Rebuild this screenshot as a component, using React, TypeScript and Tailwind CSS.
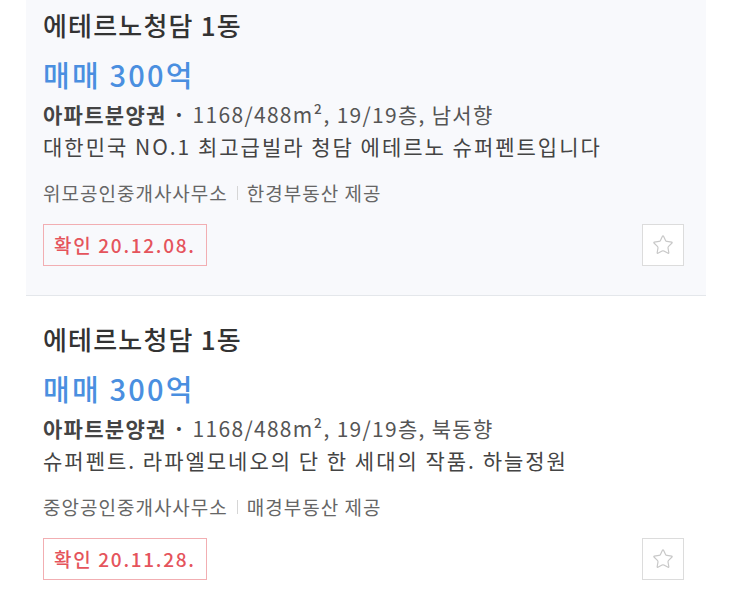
import { Star } from 'lucide-react';

type Listing = {
  name: string;
  price: string;
  spec: string;
  desc: string;
  agency: string;
  source: string;
  checked: string;
  highlight?: boolean;
};

const listings: Listing[] = [
  {
    name: '에테르노청담 1동',
    price: '매매 300억',
    spec: '1168/488m², 19/19층, 남서향',
    desc: '대한민국 NO.1 최고급빌라 청담 에테르노 슈퍼펜트입니다',
    agency: '위모공인중개사사무소',
    source: '한경부동산 제공',
    checked: '확인 20.12.08.',
    highlight: true,
  },
  {
    name: '에테르노청담 1동',
    price: '매매 300억',
    spec: '1168/488m², 19/19층, 북동향',
    desc: '슈퍼펜트. 라파엘모네오의 단 한 세대의 작품. 하늘정원',
    agency: '중앙공인중개사사무소',
    source: '매경부동산 제공',
    checked: '확인 20.11.28.',
  },
];

function ListingCard({ item }: { item: Listing }) {
  return (
    <div
      className={`border-b border-[#e4e7eb] pt-[27px] pb-[29px] pl-[17px] pr-[22px] ${
        item.highlight ? 'bg-[#f8f9fc]' : 'bg-white'
      }`}
    >
      <h2 className="text-[26px] leading-[32px] font-medium text-[#333] tracking-[1.2px]">{item.name}</h2>
      <p className="mt-[15px] text-[29px] leading-[36px] font-medium text-[#4a8fe0] tracking-[2.2px]">
        {item.price}
      </p>
      <p className="mt-[8px] text-[21px] leading-[28px] text-[#555] tracking-[1.3px]">
        <span className="font-bold text-[#444]">아파트분양권 · </span>
        {item.spec}
      </p>
      <p className="mt-[4px] text-[21px] leading-[28px] text-[#444] tracking-[2px]">{item.desc}</p>
      <p className="mt-[20px] flex items-center text-[19px] leading-[26px] text-[#666] tracking-[1px]">
        <span>{item.agency}</span>
        <span className="mx-[9px] h-[14px] w-px bg-[#d6d6d6]" />
        <span>{item.source}</span>
      </p>
      <div className="mt-[18px] flex items-center justify-between">
        <span className="flex h-[42px] items-center border border-[#f2aeb2] px-[10px] text-[19px] font-medium text-[#e5545c] tracking-[1.7px]">
          {item.checked}
        </span>
        <button className="flex h-[42px] w-[42px] items-center justify-center border border-[#dcdcdc] bg-white">
          <Star size={22} strokeWidth={1.3} className="text-[#c8c8c8]" />
        </button>
      </div>
    </div>
  );
}

export default function App() {
  return (
    <div className="min-h-screen overflow-hidden bg-white font-['Noto_Sans_CJK_KR','Noto_Sans',sans-serif]">
      <div className="ml-[26px] mt-[-18px] w-[680px]">
        {listings.map((item, i) => (
          <ListingCard key={i} item={item} />
        ))}
      </div>
    </div>
  );
}
